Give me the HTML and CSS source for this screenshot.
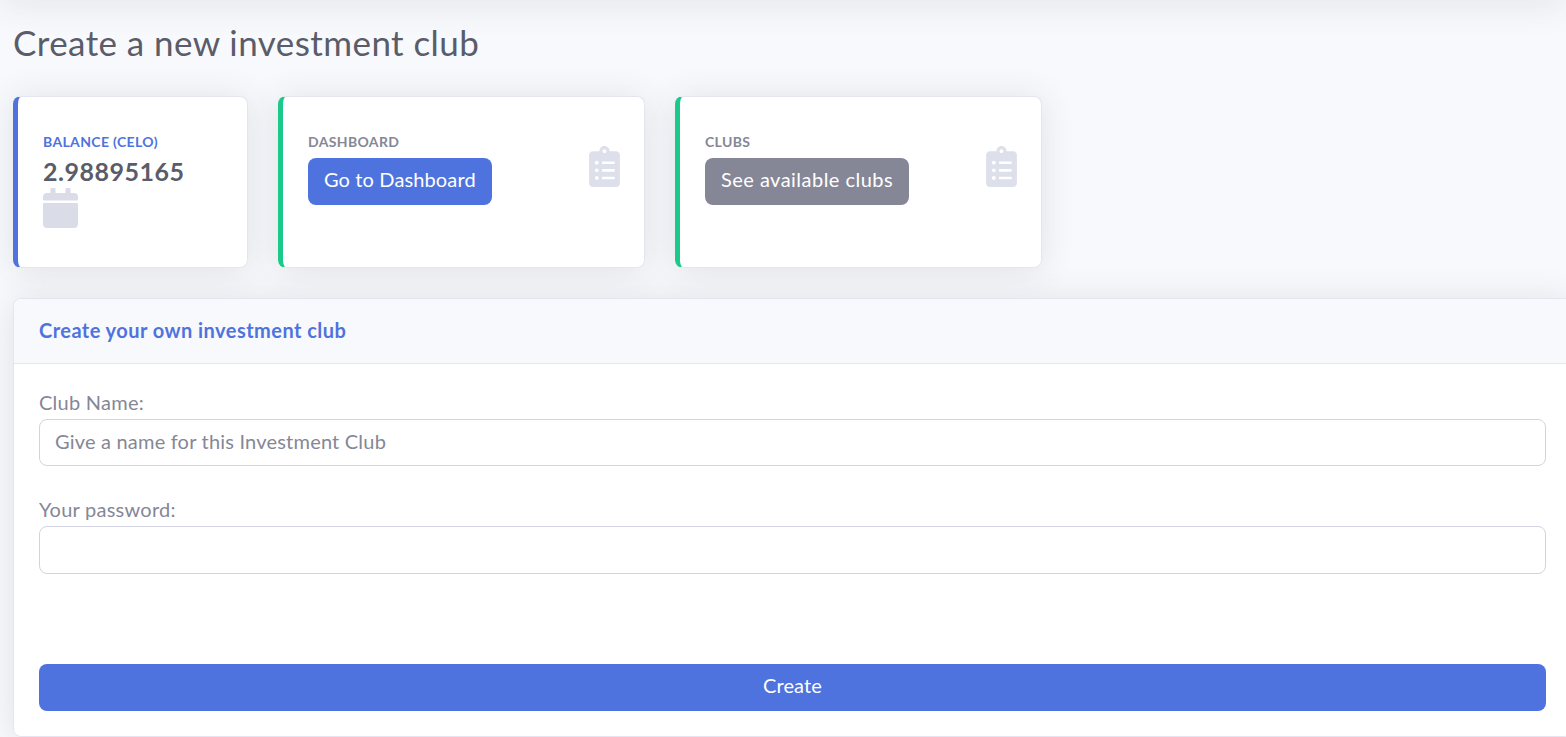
FILE: index.html
```html
<!DOCTYPE html>
<html lang="en">
<head>
<meta charset="utf-8">
<title>Create a new investment club</title>
<link rel="stylesheet" href="styles.css">
</head>
<body>
<div class="topbar"></div>
<main class="page">
  <h1 class="title">Create a new investment club</h1>
  <section class="stats">
    <article class="stat stat-primary">
      <div class="stat-label label-primary">Balance (CELO)</div>
      <div class="stat-value">2.98895165</div>
      <svg class="icon-calendar" viewBox="0 0 448 512" aria-hidden="true"><path d="M12 192h424c6.600 0 12 5.400 12 12v260c0 26.500-21.500 48-48 48H48c-26.500 0-48-21.500-48-48V204c0-6.600 5.400-12 12-12zm436-44v-36c0-26.500-21.500-48-48-48h-48V12c0-6.600-5.400-12-12-12h-40c-6.600 0-12 5.400-12 12v52H160V12c0-6.600-5.400-12-12-12h-40c-6.600 0-12 5.400-12 12v52H48C21.500 64 0 85.500 0 112v36c0 6.600 5.400 12 12 12h424c6.600 0 12-5.400 12-12z"/></svg>
    </article>
    <article class="stat stat-success">
      <div class="stat-main">
        <div class="stat-label">Dashboard</div>
        <a class="btn btn-primary" href="#">Go to Dashboard</a>
      </div>
      <svg class="icon-clipboard" viewBox="0 0 384 512" aria-hidden="true"><path d="M336 64h-80c0-35.300-28.700-64-64-64s-64 28.700-64 64H48C21.500 64 0 85.500 0 112v352c0 26.500 21.500 48 48 48h288c26.500 0 48-21.500 48-48V112c0-26.500-21.500-48-48-48zM96 424c-13.300 0-24-10.700-24-24s10.700-24 24-24 24 10.700 24 24-10.700 24-24 24zm0-96c-13.300 0-24-10.700-24-24s10.700-24 24-24 24 10.700 24 24-10.700 24-24 24zm0-96c-13.300 0-24-10.700-24-24s10.700-24 24-24 24 10.700 24 24-10.700 24-24 24zm96-192c13.300 0 24 10.700 24 24s-10.700 24-24 24-24-10.700-24-24 10.700-24 24-24zm128 368c0 4.400-3.600 8-8 8H168c-4.400 0-8-3.600-8-8v-16c0-4.400 3.600-8 8-8h144c4.400 0 8 3.600 8 8v16zm0-96c0 4.400-3.600 8-8 8H168c-4.400 0-8-3.600-8-8v-16c0-4.400 3.600-8 8-8h144c4.400 0 8 3.600 8 8v16zm0-96c0 4.400-3.600 8-8 8H168c-4.400 0-8-3.600-8-8v-16c0-4.400 3.600-8 8-8h144c4.400 0 8 3.600 8 8v16z"/></svg>
    </article>
    <article class="stat stat-success">
      <div class="stat-main">
        <div class="stat-label">Clubs</div>
        <a class="btn btn-secondary" href="#">See available clubs</a>
      </div>
      <svg class="icon-clipboard" viewBox="0 0 384 512" aria-hidden="true"><path d="M336 64h-80c0-35.300-28.700-64-64-64s-64 28.700-64 64H48C21.500 64 0 85.500 0 112v352c0 26.500 21.500 48 48 48h288c26.500 0 48-21.500 48-48V112c0-26.500-21.500-48-48-48zM96 424c-13.300 0-24-10.700-24-24s10.700-24 24-24 24 10.700 24 24-10.700 24-24 24zm0-96c-13.300 0-24-10.700-24-24s10.700-24 24-24 24 10.700 24 24-10.700 24-24 24zm0-96c-13.300 0-24-10.700-24-24s10.700-24 24-24 24 10.700 24 24-10.700 24-24 24zm96-192c13.300 0 24 10.700 24 24s-10.700 24-24 24-24-10.700-24-24 10.700-24 24-24zm128 368c0 4.400-3.600 8-8 8H168c-4.400 0-8-3.600-8-8v-16c0-4.400 3.600-8 8-8h144c4.400 0 8 3.600 8 8v16zm0-96c0 4.400-3.600 8-8 8H168c-4.400 0-8-3.600-8-8v-16c0-4.400 3.600-8 8-8h144c4.400 0 8 3.600 8 8v16zm0-96c0 4.400-3.600 8-8 8H168c-4.400 0-8-3.600-8-8v-16c0-4.400 3.600-8 8-8h144c4.400 0 8 3.600 8 8v16z"/></svg>
    </article>
  </section>
  <section class="panel">
    <header class="panel-header">Create your own investment club</header>
    <form class="panel-body">
      <label class="field">
        <span class="field-label">Club Name:</span>
        <input class="input" type="text" placeholder="Give a name for this Investment Club">
      </label>
      <label class="field">
        <span class="field-label">Your password:</span>
        <input class="input input-tall" type="password">
      </label>
      <button class="btn btn-primary btn-block" type="button">Create</button>
    </form>
  </section>
</main>
</body>
</html>
```

FILE: styles.css
```css
* { box-sizing: border-box; }

html, body {
  margin: 0;
  height: 737px;
  overflow: hidden;
}

body {
  background: #f8f9fc;
  color: #858796;
  font-family: "Lato", "Noto Sans", sans-serif;
  font-size: 20px;
}

.topbar {
  height: 20px;
  margin-top: -20px;
  box-shadow: 0 2px 35px rgba(58, 59, 69, 0.15);
}

.page {
  padding: 0 0 0 13px;
  width: 1572px;
}

.title {
  margin: 0;
  padding-top: 20px;
  height: 96px;
  font-size: 35px;
  line-height: 44px;
  font-weight: 400;
  letter-spacing: 0.43px;
  color: #5a5c69;
}

.stats {
  display: grid;
  grid-template-columns: 235px 367px 367px;
  gap: 30px;
  height: 172px;
}

.stat {
  display: flex;
  align-items: flex-start;
  justify-content: space-between;
  background: #fff;
  border: 1px solid #e3e6f0;
  border-radius: 8px;
  padding: 36px 24px 0 25px;
  box-shadow: 0 2.5px 35px rgba(58, 59, 69, 0.12);
}

.stat-primary {
  display: block;
  border-left: 5px solid #4e73df;
}

.stat-success { border-left: 5px solid #1cc88a; }

.stat-label {
  font-size: 14px;
  line-height: 17px;
  font-weight: 700;
  letter-spacing: 0.35px;
  text-transform: uppercase;
  color: #858796;
}

.label-primary { color: #4e73df; }

.stat-value {
  margin-top: 6px;
  font-size: 25px;
  line-height: 30px;
  font-weight: 700;
  letter-spacing: 0.5px;
  color: #5a5c69;
}

.icon-calendar {
  display: block;
  width: 35px;
  height: 40px;
  margin-top: 2px;
  fill: #dadde8;
}

.icon-clipboard {
  display: block;
  flex: none;
  width: 31px;
  height: 41px;
  margin-top: 13px;
  fill: #dddfeb;
}

.btn {
  display: inline-block;
  border: 1px solid transparent;
  border-radius: 8px;
  padding: 0 15px;
  height: 47px;
  font-family: inherit;
  font-size: 20px;
  line-height: 41px;
  font-weight: 400;
  letter-spacing: 0.13px;
  color: #fff;
  text-decoration: none;
}

.stat-main .btn { margin-top: 8px; }

.btn-primary { background: #4e73df; }
.btn-secondary { background: #858796; letter-spacing: 0.47px; }
.btn-block { display: block; width: 100%; padding-bottom: 4px; }

.panel {
  margin-top: 30px;
  height: 439px;
  background: #fff;
  border: 1px solid #e3e6f0;
  border-radius: 8px;
  box-shadow: 0 2.5px 35px rgba(58, 59, 69, 0.12);
  overflow: hidden;
}

.panel-header {
  height: 65px;
  padding: 0 25px;
  background: #f8f9fc;
  border-bottom: 1px solid #e3e6f0;
  font-size: 20px;
  line-height: 63px;
  font-weight: 700;
  letter-spacing: 0.45px;
  color: #4e73df;
}

.panel-body {
  padding: 25px 25px 0;
}

.field {
  display: block;
  margin-bottom: 30px;
}

.field-label {
  display: block;
  height: 30px;
  line-height: 26px;
  letter-spacing: 0.25px;
}

.input {
  display: block;
  width: 100%;
  height: 47px;
  padding: 0 15px 4px;
  background: #fff;
  border: 1px solid #d1d3e2;
  border-radius: 8px;
  font-family: inherit;
  font-size: 20px;
  letter-spacing: 0.2px;
  color: #6e707e;
}

.input-tall { height: 48px; }

.input::placeholder {
  color: #858796;
  opacity: 1;
}

.panel-body .btn-block { margin-top: 90px; }
```
